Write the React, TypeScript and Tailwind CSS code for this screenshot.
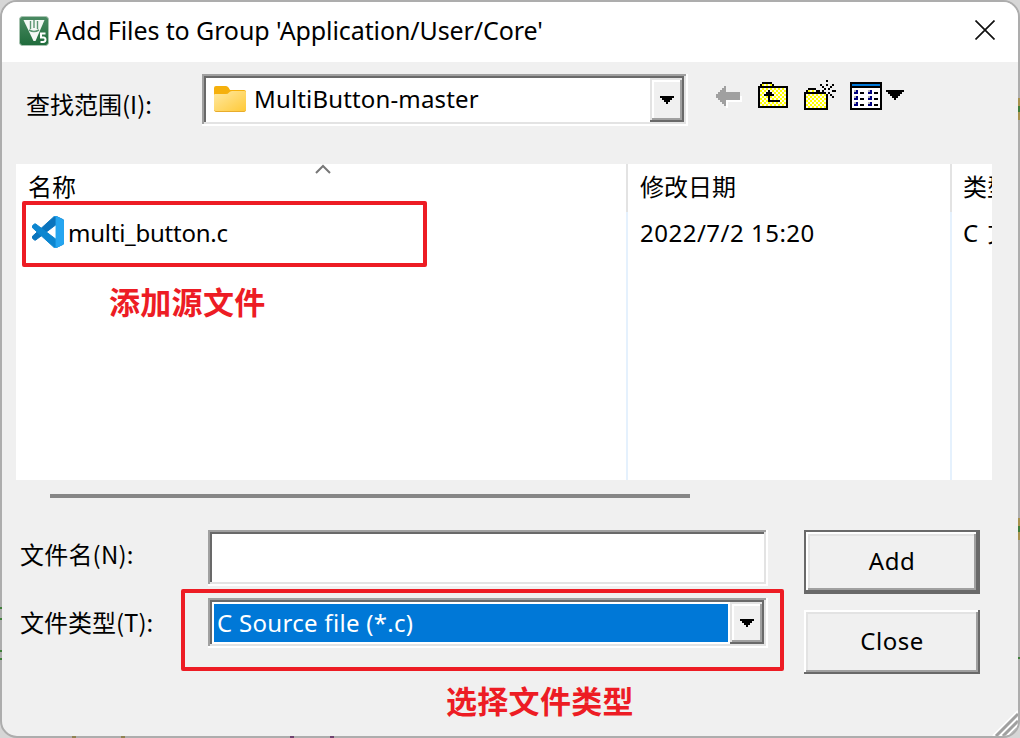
import React from "react";

const palette: Record<string, string> = {
  "#": "#000000",
  g: "#a0a0a0",
  w: "#ffffff",
  n: "#000080",
  l: "#b8b8b8",
  b: "#0078d7",
};

function Pixels({ rows }: { rows: string[] }) {
  const width = rows[0].length;
  return (
    <svg width={width * 2} height={rows.length * 2} viewBox={`0 0 ${width} ${rows.length}`} shapeRendering="crispEdges" className="block shrink-0">
      {rows.flatMap((row, y) =>
        row.split("").map((c, x) => {
          if (c === ".") return null;
          const fill = c === "y" ? ((x + y) % 2 ? "#ffff00" : "#fffbe6") : palette[c];
          return <rect key={`${x}-${y}`} x={x} y={y} width={1} height={1} fill={fill} />;
        })
      )}
    </svg>
  );
}

const back = [
  "....g........",
  "...gg........",
  "..ggg........",
  ".ggggggggggg.",
  "gggggggggggg.",
  "ggggggggggggw",
  ".gggggggggggw",
  "..gggwwwwwwww",
  "...ggw.......",
  "....gw.......",
  ".....w.......",
];

const up = [
  "..#####........",
  ".#yyyyy#.......",
  "###############",
  "#yyyyyyyyyyyyy#",
  "#yyyy#yyyyyyyy#",
  "#yyy###yyyyyyy#",
  "#yy#####yyyyyy#",
  "#yyyy#yyyyyyyy#",
  "#yyyy#yyyyyyyy#",
  "#yyyy######yyy#",
  "#yyyyyyyyyyyyy#",
  "#yyyyyyyyyyyyy#",
  "###############",
];

const create = [
  "...........#....",
  "................",
  "........#..#..#.",
  ".........#...#..",
  "..####....#.#...",
  ".#yyyy##.#....##",
  "###########.#...",
  "#yyyyyyyyyy#.#..",
  "#yyyyyyyyyy#..#.",
  "#yyyyyyyyyy#....",
  "#yyyyyyyyyy#....",
  "#yyyyyyyyyy#....",
  "#yyyyyyyyyy#....",
  "#yyyyyyyyyy#....",
  "############....",
];

const views = [
  "################",
  "#bbbbbbbbbbbbbb#",
  "################",
  "#wwwwwwwwwwwwww#",
  "#wlnwwwwwlnwwww#",
  "#wnnw##wwnnw##w#",
  "#wwwwwwwwwwwwww#",
  "#wlnwwwwwlnwwww#",
  "#wnnw##wwnnw##w#",
  "#wwwwwwwwwwwwww#",
  "#wlnwwwwwlnwwww#",
  "#wnnw##wwnnw##w#",
  "#wwwwwwwwwwwwww#",
  "################",
];

const caret = ["#######", ".#####.", "..###..", "...#..."];
const wideCaret = ["#########", ".#######.", "..#####..", "...###...", "....#...."];

const sunken = "shadow-[inset_-2px_-2px_#fff,inset_2px_2px_#a0a0a0,inset_-4px_-4px_#e3e3e3,inset_4px_4px_#696969]";

function DropButton() {
  return (
    <div className="flex h-full w-[34px] shrink-0 items-center justify-center bg-[#f0f0f0] shadow-[inset_-2px_-2px_#696969,inset_2px_2px_#e3e3e3,inset_-4px_-4px_#a0a0a0,inset_4px_4px_#fff]">
      <Pixels rows={caret} />
    </div>
  );
}

function AppLogo() {
  return (
    <svg width="30" height="30" viewBox="0 0 30 30" className="block">
      <defs>
        <linearGradient id="logo" x1="0" y1="0" x2="0" y2="1">
          <stop offset="0" stopColor="#4a8a62" />
          <stop offset="1" stopColor="#1f6b3b" />
        </linearGradient>
      </defs>
      <rect x="0.5" y="0.5" width="29" height="29" rx="3" fill="url(#logo)" stroke="#a9c4b2" />
      <path d="M4.500 4h21L16.500 25h-2z" fill="#f4f8f5" />
      <path d="M11.500 5v8M15 4v8M18.500 5v8" stroke="#5c9673" strokeWidth="1.400" />
      <path d="M10 14q5 3 10 0" stroke="#5c9673" strokeWidth="1.500" fill="none" />
      <path d="M26.500 17.500h-4.500v4h2.500q2 .2 2 2.200t-2.500 2.300h-2.500" stroke="#fff" strokeWidth="2" fill="none" />
    </svg>
  );
}

function FolderIcon() {
  return (
    <svg width="32" height="26" viewBox="0 0 32 26" className="block shrink-0">
      <defs>
        <linearGradient id="folder" x1="0" y1="0" x2="1" y2="1">
          <stop offset="0" stopColor="#ffe9a2" />
          <stop offset="1" stopColor="#ffc937" />
        </linearGradient>
      </defs>
      <path d="M0 2q0-2 2-2h10q1.500 0 2.500 1.500L16 4h14q2 0 2 2v6H0z" fill="#f5b00c" />
      <path d="M0 9q0-1 1-1h11q2 0 3-1.500T18 5h12.500q1.500 0 1.500 1.500V24q0 1.500-1.500 1.500h-29Q0 25.500 0 24z" fill="url(#folder)" />
      <path d="M.5 24.500q.5 1 1.500 1h28q1 0 1.500-1" stroke="#e8ac2c" fill="none" />
    </svg>
  );
}

function CodeIcon() {
  return (
    <svg width="32" height="32" viewBox="0 0 100 100" className="block shrink-0">
      <path d="M96 11 75.500 1a6 6 0 0 0-7 1.200L1.300 63.500a4 4 0 0 0 0 6l5.500 5a4 4 0 0 0 5.300.2L93.400 13.400c2.600-2 6.600-.1 6.600 3.300v-.3A6 6 0 0 0 96 11z" fill="#0a74bd" stroke="#0a74bd" strokeWidth="3" />
      <path d="M96 89 75.500 99a6 6 0 0 1-7-1.200L1.300 36.500a4 4 0 0 1 0-6l5.500-5a4 4 0 0 1 5.300-.2L93.400 86.600c2.600 2 6.600.1 6.600-3.300v.3A6 6 0 0 1 96 89z" fill="#0c86d0" stroke="#0c86d0" strokeWidth="3" />
      <path d="M75.500 99a6 6 0 0 1-7-1.200c2.300 2.300 6.200.7 6.200-2.600V4.800c0-3.300-3.900-4.900-6.200-2.600a6 6 0 0 1 7-1.200L96 11a6 6 0 0 1 4 5.500v67a6 6 0 0 1-4 5.500z" fill="#25a5f0" stroke="#25a5f0" strokeWidth="2" />
    </svg>
  );
}

export default function App() {
  return (
    <div className="relative h-[738px] w-[1020px] overflow-hidden bg-[#d6d6d6] font-['Noto_Sans','Noto_Sans_CJK_SC',sans-serif] text-[24px] leading-[32px] text-black">
      <div className="flex h-full flex-col overflow-hidden rounded-[17px] border-2 border-[#adadad] bg-[#f0f0f0]">
        <header className="flex h-[60px] shrink-0 items-center bg-white pl-[17px]">
          <div className="mb-[2px]"><AppLogo /></div>
          <h1 className="mb-[4px] ml-[6px] whitespace-nowrap text-[25px] tracking-[-0.1px]">Add Files to Group 'Application/User/Core'</h1>
          <svg width="20" height="20" viewBox="0 0 20 20" className="mr-[23px] mb-[4px] ml-auto">
            <path d="M.5.5l19 19M19.500.5l-19 19" stroke="#111" strokeWidth="1.700" />
          </svg>
        </header>

        <div className="flex h-[102px] shrink-0 pt-[12px] pl-[24px]">
          <label className="mt-[14px] w-[176px] font-['Noto_Sans_CJK_SC',sans-serif]">查找范围(I):</label>
          <div className={`flex h-[52px] w-[486px] bg-white p-[4px] ${sunken}`}>
            <div className="flex flex-1 items-center pl-[8px]">
              <div className="mb-[2px]"><FolderIcon /></div>
              <span className="mb-[2px] ml-[8px] tracking-[0.15px]">MultiButton-master</span>
            </div>
            <DropButton />
          </div>
          <div className="flex items-start pl-[28px]">
            <div className="mt-[12px] mr-[16px]"><Pixels rows={back} /></div>
            <div className="mt-[8px] mr-[16px]"><Pixels rows={up} /></div>
            <div className="mt-[6px] mr-[14px]"><Pixels rows={create} /></div>
            <div className="mt-[8px] mr-[4px]"><Pixels rows={views} /></div>
            <div className="mt-[16px]"><Pixels rows={wideCaret} /></div>
          </div>
        </div>

        <section className="ml-[14px] grid h-[316px] w-[976px] shrink-0 grid-cols-[610px_324px_42px] grid-rows-[48px_268px] overflow-hidden whitespace-nowrap bg-white">
          <div className="flex pt-[7px] pl-[12px]">
            名称
            <svg width="16" height="10" viewBox="0 0 16 10" className="-mt-[7px] ml-[239px]">
              <path d="M1 9l7-7 7 7" stroke="#777" strokeWidth="2" fill="none" />
            </svg>
          </div>
          <div className="border-l-2 border-[#e3e3e3] pt-[7px] pl-[12px]">修改日期</div>
          <div className="overflow-hidden border-l-2 border-[#e3e3e3] pt-[7px] pl-[11px]">类型</div>
          <div className="flex pt-[4px] pl-[16px]">
            <CodeIcon />
            <span className="mt-[1px] ml-[4px] tracking-[-0.25px]">multi_button.c</span>
          </div>
          <div className="border-l-2 border-[#e5f1fd] pt-[5px] pl-[12px] tracking-[0.5px]">2022/7/2 15:20</div>
          <div className="overflow-hidden border-l-2 border-[#e5f1fd] pt-[5px] pl-[11px] tracking-[1.5px]">C 文件</div>
        </section>

        <div className="mt-[14px] ml-[48px] h-[4px] w-[640px] shrink-0 bg-[#868686]" />

        <section className="mt-[32px] flex pl-[18px]">
          <div className="w-[188px] font-['Noto_Sans_CJK_SC',sans-serif]">
            <div className="pt-[8px] tracking-[0.2px]">文件名(N):</div>
            <div className="pt-[36px]">文件类型(T):</div>
          </div>
          <div className="w-[560px]">
            <div className={`h-[56px] bg-white ${sunken}`} />
            <div className={`mt-[12px] flex h-[50px] bg-white p-[4px] ${sunken}`}>
              <div className="m-[2px] flex flex-1 items-center bg-[#0078d7] pl-[3px] tracking-[0.3px] text-white">C Source file (*.c)</div>
              <DropButton />
            </div>
          </div>
          <div className="ml-[36px] w-[176px]">
            <button className="flex h-[64px] w-full items-center justify-center bg-[#f0f0f0] pb-[2px] tracking-[0.5px] shadow-[inset_0_0_0_2px_#696969,inset_-4px_-4px_#696969,inset_4px_4px_#fff,inset_-6px_-6px_#a0a0a0,inset_6px_6px_#e3e3e3]">Add</button>
            <button className="mt-[16px] flex h-[64px] w-full items-center justify-center bg-[#f0f0f0] pb-[2px] tracking-[0.5px] shadow-[inset_-2px_-2px_#696969,inset_2px_2px_#fff,inset_-4px_-4px_#a0a0a0,inset_4px_4px_#e3e3e3]">Close</button>
          </div>
        </section>
      </div>

      <svg width="26" height="26" viewBox="0 0 26 26" className="absolute right-[2px] bottom-[2px] rounded-br-[15px]">
        <path d="M1 26L26 1M8 26L26 8M15 26L26 15" stroke="#fff" strokeWidth="2" />
        <path d="M4 26L26 4M11 26L26 11M18 26L26 18" stroke="#a0a0a0" strokeWidth="3" />
      </svg>

      <div className="absolute top-[98px] right-0 h-[22px] w-[2px] border-y-8 border-[#a8924e] bg-[#3f7f3a]" />
      <div className="absolute top-[518px] right-0 h-[22px] w-[2px] border-y-8 border-[#a8924e] bg-[#3f7f3a]" />
      <div className="absolute top-[657px] right-0 h-[2px] w-[2px] bg-[#3f7f3a]" />
      <div className="absolute top-[607px] left-0 h-[13px] w-[2px] border-y-2 border-[#3f7f3a]" />
      <div className="absolute top-[650px] left-0 h-[10px] w-[2px] border-y-2 border-[#3f7f3a]" />
      <div className="absolute bottom-0 left-[72px] h-[2px] w-[53px] border-x-4 border-[#8f8352]" />
      <div className="absolute bottom-0 left-[290px] h-[2px] w-[44px] border-x-4 border-[#6e4470]" />

      <div className="absolute top-[201px] left-[22px] h-[66px] w-[405px] rounded-[2px] border-4 border-[#ed1c24]" />
      <div className="absolute top-[589px] left-[181px] h-[82px] w-[603px] rounded-[2px] border-4 border-[#ed1c24]" />
      <div className="absolute top-[281px] left-[109px] whitespace-nowrap font-['Noto_Sans_CJK_SC',sans-serif] text-[31px] leading-[40px] font-bold tracking-[0.3px] text-[#ed1c24]">添加源文件</div>
      <div className="absolute top-[680px] left-[446px] whitespace-nowrap font-['Noto_Sans_CJK_SC',sans-serif] text-[31px] leading-[40px] font-bold tracking-[0.3px] text-[#ed1c24]">选择文件类型</div>
    </div>
  );
}
